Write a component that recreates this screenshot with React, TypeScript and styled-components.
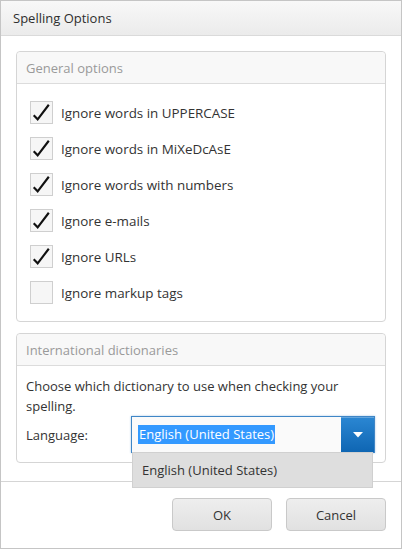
import React from "react";
import styled, { createGlobalStyle } from "styled-components";

const Global = createGlobalStyle`
  html, body { margin: 0; padding: 0; background: #ffffff; }
  * { box-sizing: border-box; }
  body { font-family: "Open Sans", "Noto Sans", sans-serif; color: #333333; }
`;

const Window = styled.div`
  width: 402px;
  height: 549px;
  border: 1px solid #c5c5c5;
  display: flex;
  flex-direction: column;
  background: #ffffff;
`;

const TitleBar = styled.div`
  height: 35px;
  flex: none;
  display: flex;
  align-items: center;
  padding-left: 12px;
  font-size: 13px;
  color: #2e2e2e;
  background: linear-gradient(#f8f8f8, #ebebeb);
  border-bottom: 1px solid #dadada;
`;

const Body = styled.div`
  flex: 1;
  padding: 15px 15px 0 15px;
  display: flex;
  flex-direction: column;
  gap: 11px;
`;

const Fieldset = styled.section<{ $h: number }>`
  height: ${(p) => p.$h}px;
  border: 1px solid #d5d5d5;
  border-radius: 4px;
  display: flex;
  flex-direction: column;
`;

const Legend = styled.div`
  height: 32px;
  flex: none;
  display: flex;
  align-items: center;
  padding-left: 9px;
  font-size: 13px;
  color: #9a9a9a;
  background: #f8f8f8;
  border-bottom: 1px solid #dcdcdc;
  border-radius: 4px 4px 0 0;
`;

const Options = styled.div`
  padding: 17px 0 0 13px;
  display: flex;
  flex-direction: column;
  gap: 13px;
`;

const OptionRow = styled.label`
  display: flex;
  align-items: center;
  gap: 8px;
  height: 23px;
  font-size: 13.4px;
  color: #333333;
  padding-top: 1px;
`;

const Box = styled.span`
  width: 23px;
  height: 23px;
  flex: none;
  border: 1px solid #cfcfcf;
  background: #f6f6f6;
  display: flex;
  align-items: center;
  justify-content: center;
  margin-top: -1px;
`;

const DictContent = styled.div`
  padding: 10px 0 0 9px;
  font-size: 13px;
  color: #333333;
  position: relative;
`;

const Para = styled.p`
  margin: 0;
  line-height: 20px;
`;

const LangRow = styled.div`
  margin-top: 0;
  display: flex;
  align-items: center;
`;

const LangLabel = styled.span`
  width: 105px;
`;

const SelectWrap = styled.div`
  position: relative;
  width: 244px;
  height: 37px;
`;

const Select = styled.div`
  height: 100%;
  display: flex;
  border: 1px solid #3f86c6;
  background: #fafafa;
  box-shadow: 0 0 2px rgba(40, 120, 200, 0.4);
`;

const Value = styled.div`
  flex: 1;
  display: flex;
  align-items: center;
  padding-left: 6px;
`;

const Highlight = styled.span`
  background: #3399ff;
  color: #ffffff;
  line-height: 19px;
  padding: 0 1px;
`;

const Arrow = styled.div`
  width: 33px;
  flex: none;
  background: linear-gradient(#2a86d2, #0f66b3);
  border-top: 1px solid #63a5dd;
  display: flex;
  align-items: center;
  justify-content: center;
`;

const DropList = styled.div`
  position: absolute;
  top: 36px;
  left: 1px;
  width: 241px;
  height: 36px;
  background: #dedede;
  border: 1px solid #d0d0d0;
  display: flex;
  align-items: center;
  padding-left: 9px;
  color: #333333;
  z-index: 2;
`;

const Footer = styled.div`
  height: 67px;
  flex: none;
  border-top: 1px solid #d5d5d5;
  display: flex;
  justify-content: flex-end;
  align-items: flex-start;
  gap: 14px;
  padding: 16px 15px 0 0;
`;

const Button = styled.button`
  width: 100px;
  height: 33px;
  border: 1px solid #c9c9c9;
  border-radius: 4px;
  background: linear-gradient(#eeeeee, #e1e1e1);
  font-family: "Open Sans", "Noto Sans", sans-serif;
  font-size: 13px;
  color: #333333;
  padding: 0;
`;

const Check = () => (
  <svg width="23" height="23" viewBox="0 0 23 23">
    <path d="M3 14.5 L7.3 19 L19.5 3" fill="none" stroke="#111" strokeWidth="2.3" strokeLinecap="butt" strokeLinejoin="miter" />
  </svg>
);

const options: [string, boolean][] = [
  ["Ignore words in UPPERCASE", true],
  ["Ignore words in MiXeDcAsE", true],
  ["Ignore words with numbers", true],
  ["Ignore e-mails", true],
  ["Ignore URLs", true],
  ["Ignore markup tags", false],
];

export default function App() {
  return (
    <>
      <Global />
      <Window>
        <TitleBar>Spelling Options</TitleBar>
        <Body>
          <Fieldset $h={271}>
            <Legend>General options</Legend>
            <Options>
              {options.map(([t, c]) => (
                <OptionRow key={t}>
                  <Box>{c && <Check />}</Box>
                  {t}
                </OptionRow>
              ))}
            </Options>
          </Fieldset>
          <Fieldset $h={130}>
            <Legend>International dictionaries</Legend>
            <DictContent>
              <Para>Choose which dictionary to use when checking your spelling.</Para>
              <LangRow>
                <LangLabel>Language:</LangLabel>
                <SelectWrap>
                  <Select>
                    <Value>
                      <Highlight>English (United States)</Highlight>
                    </Value>
                    <Arrow>
                      <svg width="10" height="6" viewBox="0 0 10 6">
                        <path d="M0 0 H10 L5 5.5 Z" fill="#ffffff" />
                      </svg>
                    </Arrow>
                  </Select>
                  <DropList>English (United States)</DropList>
                </SelectWrap>
              </LangRow>
            </DictContent>
          </Fieldset>
        </Body>
        <Footer>
          <Button>OK</Button>
          <Button>Cancel</Button>
        </Footer>
      </Window>
    </>
  );
}
